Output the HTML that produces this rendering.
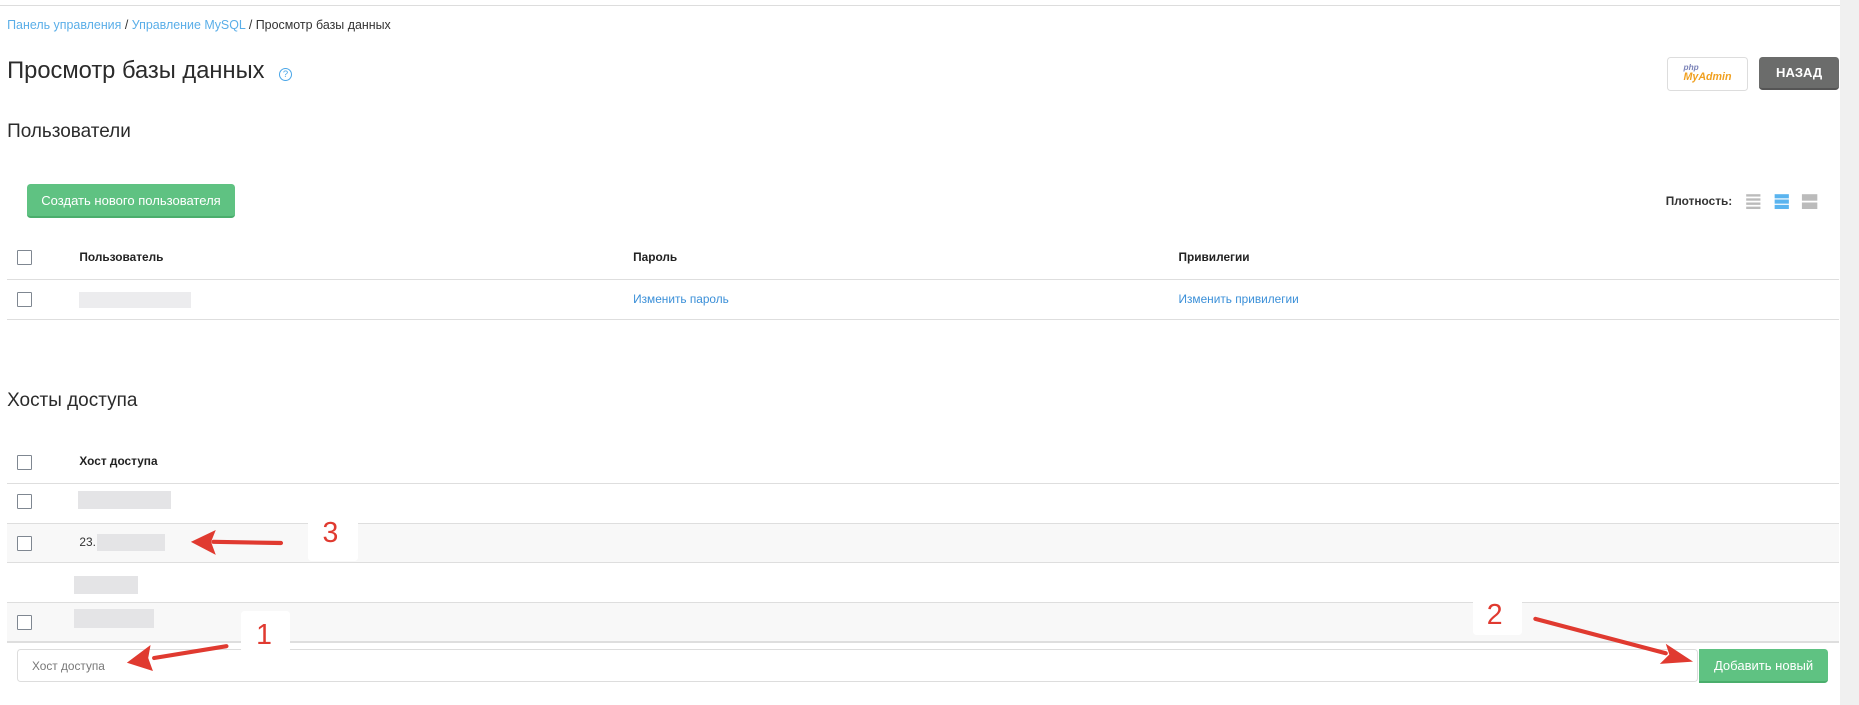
<!DOCTYPE html>
<html><head><meta charset="utf-8">
<style>
html,body{margin:0;padding:0;background:#fff;overflow:hidden}
body{width:1859px;height:705px}
#w{zoom:1.1856;width:1568px;height:595px;position:relative;font-family:"Liberation Sans",sans-serif;color:#333}
.a{position:absolute}
.cb{position:absolute;width:11px;height:11px;border:1px solid #7f8791;background:#fff;border-radius:1px}
.hl{position:absolute;left:6px;width:1545px;height:1px;background:#dedede}
.th{font-size:10px;font-weight:bold;color:#222}
.lnk{color:#3a8fd8;font-size:10px}
.blur{position:absolute;background:#e4e4e6}
</style></head><body><div id="w">
<div class="a" style="left:0;top:4px;width:1552px;height:1px;background:#ddd"></div>
<div class="a" style="left:1552px;top:0;width:16px;height:595px;background:#f0f0f0"></div>
<div class="a" style="left:6px;top:15px;font-size:10.5px;color:#333"><span style="color:#5aaee8">Панель управления</span> / <span style="color:#5aaee8">Управление MySQL</span> / Просмотр базы данных</div>
<div class="a" style="left:6px;top:49px;font-size:20px;color:#2b2b2b">Просмотр базы данных</div>
<div class="a" style="left:235px;top:57px;width:10px;height:10px;border:1px solid #4aa6e8;border-radius:50%;font-size:8px;line-height:10px;text-align:center;color:#4aa6e8">?</div>
<div class="a" style="left:1406px;top:48px;width:67px;height:27px;border:1px solid #ddd;border-radius:3px;background:#fff"></div>
<div class="a" style="left:1420px;top:52px;font-size:7px;font-style:italic;font-weight:bold;color:#7b83b8">php</div>
<div class="a" style="left:1420px;top:60px;font-size:9px;font-style:italic;font-weight:bold;color:#f0a020">MyAdmin</div>
<div class="a" style="left:1484px;top:48px;width:67px;height:28px;background:#6b6c6b;border-radius:3px;border-bottom:2px solid #555;box-sizing:border-box;color:#fff;font-weight:bold;font-size:11px;text-align:center;line-height:27px">НАЗАД</div>
<div class="a" style="left:6px;top:102px;font-size:16px;color:#2b2b2b">Пользователи</div>
<div class="a" style="left:23px;top:155px;width:175px;height:29px;background:#5fc282;border-radius:3px;border-bottom:2px solid #4aae6c;box-sizing:border-box;color:#fff;font-size:11px;text-align:center;line-height:28px">Создать нового пользователя</div>
<div class="a" style="left:1405px;top:164px;font-size:10px;font-weight:bold;color:#333">Плотность:</div>
<svg class="a" style="left:1472px;top:163px" width="64" height="16">
<g fill="#bbb"><rect x="1" y="1" width="12" height="2"/><rect x="1" y="4.5" width="12" height="2"/><rect x="1" y="8" width="12" height="2"/><rect x="1" y="11.5" width="12" height="2"/></g>
<g fill="#5ab4ef"><rect x="25" y="1" width="12" height="3.5"/><rect x="25" y="5.5" width="12" height="3.5"/><rect x="25" y="10" width="12" height="3.5"/></g>
<g fill="#bbb"><rect x="48" y="1" width="13" height="5.5"/><rect x="48" y="8" width="13" height="5.5"/></g>
</svg>
<div class="cb" style="left:14px;top:211px"></div>
<div class="a th" style="left:67px;top:211px">Пользователь</div>
<div class="a th" style="left:534px;top:211px">Пароль</div>
<div class="a th" style="left:994px;top:211px">Привилегии</div>
<div class="hl" style="top:235px"></div>
<div class="cb" style="left:14px;top:246px"></div>
<div class="blur" style="left:67px;top:246px;width:94px;height:14px;background:#ececee"></div>
<div class="a lnk" style="left:534px;top:246px">Изменить пароль</div>
<div class="a lnk" style="left:994px;top:246px">Изменить привилегии</div>
<div class="hl" style="top:269px"></div>
<div class="a" style="left:6px;top:329px;font-size:16px;color:#2b2b2b">Хосты доступа</div>
<div class="cb" style="left:14px;top:384px"></div>
<div class="a th" style="left:67px;top:383px">Хост доступа</div>
<div class="hl" style="top:407px"></div>
<div class="cb" style="left:14px;top:417px"></div>
<div class="blur" style="left:66px;top:414px;width:78px;height:15px"></div>
<div class="a" style="left:6px;top:441px;width:1545px;height:33px;background:#f8f8f8"></div>
<div class="hl" style="top:441px"></div>
<div class="cb" style="left:14px;top:452px"></div>
<div class="a" style="left:67px;top:451px;font-size:10px">23.</div>
<div class="blur" style="left:82px;top:450px;width:57px;height:15px"></div>
<div class="hl" style="top:474px"></div>
<div class="blur" style="left:62px;top:486px;width:54px;height:15px"></div>
<div class="a" style="left:6px;top:508px;width:1545px;height:33px;background:#f8f8f8"></div>
<div class="hl" style="top:508px"></div>
<div class="cb" style="left:14px;top:519px"></div>
<div class="blur" style="left:62px;top:514px;width:68px;height:16px"></div>
<div class="hl" style="top:541px"></div>
<div class="a" style="left:14px;top:547px;width:1418px;height:28px;border:1px solid #ddd;border-radius:3px;box-sizing:border-box"></div>
<div class="a" style="left:27px;top:556px;font-size:10px;color:#777">Хост доступа</div>
<div class="a" style="left:1433px;top:547px;width:109px;height:29px;background:#5fc282;border-radius:0 3px 3px 0;border-bottom:2px solid #4aae6c;box-sizing:border-box;color:#fff;font-size:11px;text-align:center;line-height:28px">Добавить новый</div>
<div class="a" style="left:260px;top:437px;width:42px;height:36px;background:#fff;border-radius:3px"></div>
<div class="a" style="left:203px;top:515px;width:42px;height:36px;background:#fff;border-radius:3px"></div>
<div class="a" style="left:1242px;top:500px;width:42px;height:36px;background:#fff;border-radius:3px"></div>
<div class="a" style="left:272px;top:436px;font-size:24px;color:#e03a30">3</div>
<div class="a" style="left:216px;top:522px;font-size:24px;color:#e03a30">1</div>
<div class="a" style="left:1254px;top:505px;font-size:24px;color:#e03a30">2</div>
<svg class="a" style="left:0;top:0" width="1568" height="595">
<g stroke="#e03a30" stroke-width="3.5" stroke-linecap="round" fill="#e03a30">
<line x1="237" y1="458" x2="180" y2="457"/>
<line x1="191" y1="545" x2="130" y2="555"/>
<line x1="1295" y1="522" x2="1405" y2="551"/>
</g>
<g fill="#e03a30">
<polygon points="161,457 182,447 178,457 182,468"/>
<polygon points="107,559 127,544 125,555 129,566"/>
<polygon points="1428,558 1405,543 1408,552 1400,560"/>
</g>
</svg>
</div></body></html>
